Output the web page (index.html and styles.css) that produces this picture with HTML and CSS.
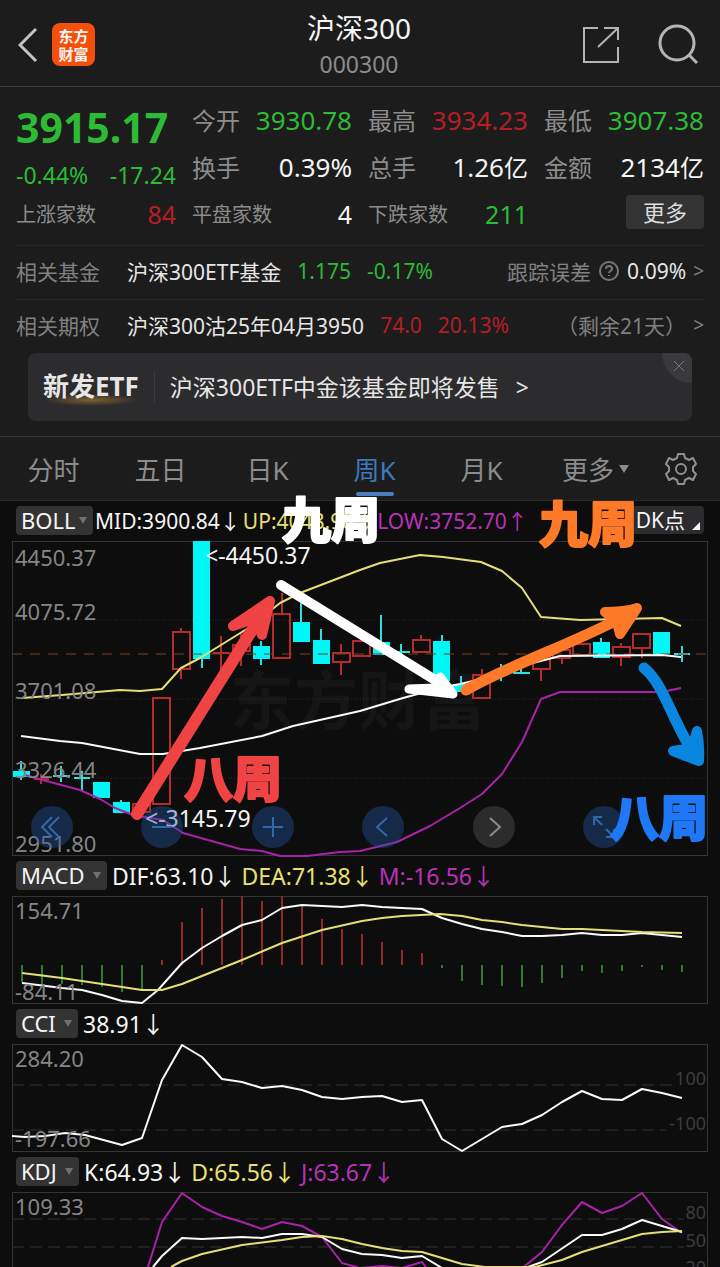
FILE: index.html
```
<!DOCTYPE html>
<html lang="zh-CN">
<head>
    <meta charset="UTF-8">
    <meta name="viewport" content="width=device-width, initial-scale=1.0">
    <title>沪深300</title>
    <link rel="stylesheet" href="styles.css">
</head>
<body>
    <header class="topbar">
        <div class="topbar-side">
            <button class="icon-btn" aria-label="返回">
                <svg width="20" height="36" viewBox="0 0 20 36"><path d="M18 2L2 18L18 34" fill="none" stroke="#c4c4c4" stroke-width="3"/></svg>
            </button>
            <a class="logo" href="#"><span>东方</span><span>财富</span></a>
        </div>
        <div class="topbar-title">
            <h1>沪深300</h1>
            <p>000300</p>
        </div>
        <div class="topbar-side topbar-right">
            <button class="icon-btn" aria-label="分享">
                <svg width="38" height="38" viewBox="0 0 38 38" fill="none" stroke="#b4b4b4" stroke-width="2"><path d="M16 2H2V36H36V21M22 2H36V14M36 2L16 21"/></svg>
            </button>
            <button class="icon-btn" aria-label="搜索">
                <svg width="42" height="42" viewBox="0 0 42 42" fill="none" stroke="#b4b4b4" stroke-width="3"><circle cx="19" cy="19" r="17"/><path d="M31 31L39 39"/></svg>
            </button>
        </div>
    </header>

    <section class="quote">
        <div class="price-box">
            <div class="price green">3915.17</div>
            <div class="change green"><span>-0.44%</span><span>-17.24</span></div>
        </div>
        <div class="cell"><span>今开</span><b class="green">3930.78</b></div>
        <div class="cell"><span>最高</span><b class="red">3934.23</b></div>
        <div class="cell"><span>最低</span><b class="green">3907.38</b></div>
        <div class="cell"><span>换手</span><b>0.39%</b></div>
        <div class="cell"><span>总手</span><b>1.26<i>亿</i></b></div>
        <div class="cell"><span>金额</span><b>2134<i>亿</i></b></div>
        <div class="cell small"><span>上涨家数</span><b class="red">84</b></div>
        <div class="cell small"><span>平盘家数</span><b>4</b></div>
        <div class="cell small"><span>下跌家数</span><b class="green">211</b></div>
        <div class="cell cell-more"><button class="more-btn">更多</button></div>
    </section>

    <section class="related">
        <a class="related-row" href="#">
            <span class="related-label">相关基金</span>
            <span class="related-name">沪深300ETF基金</span>
            <span class="green">1.175</span>
            <span class="green">-0.17%</span>
            <span class="related-right">
                <span>跟踪误差</span>
                <svg width="22" height="22" viewBox="0 0 22 22" fill="none" stroke="#777" stroke-width="2"><circle cx="11" cy="11" r="9"/><path d="M8 9C8 5 14 5 14 9C14 11 11 11 11 13M11 15V16"/></svg>
                <span class="related-white">0.09%</span>
                <span class="more-sign">&gt;</span>
            </span>
        </a>
        <a class="related-row" href="#">
            <span class="related-label">相关期权</span>
            <span class="related-name">沪深300沽25年04月3950</span>
            <span class="red">74.0</span>
            <span class="red">20.13%</span>
            <span class="related-right">
                <span>（剩余21天）</span>
                <span class="more-sign">&gt;</span>
            </span>
        </a>
    </section>

    <section class="banner">
        <strong class="banner-tag">新发ETF</strong>
        <a class="banner-link" href="#">沪深300ETF中金该基金即将发售<span>&gt;</span></a>
        <button class="banner-close" aria-label="关闭">
            <svg width="12" height="12" viewBox="0 0 12 12"><path d="M1 1L11 11M11 1L1 11" stroke="#777" stroke-width="1"/></svg>
        </button>
    </section>

    <nav class="tabs">
        <a href="#">分时</a>
        <a href="#">五日</a>
        <a href="#">日K</a>
        <a href="#" class="active">周K</a>
        <a href="#">月K</a>
        <a href="#" class="tab-more">更多<span class="caret"></span></a>
        <button class="icon-btn" aria-label="设置">
            <svg width="34" height="34" viewBox="0 0 34 34" fill="none" stroke="#909090" stroke-width="2" stroke-linejoin="round"><path d="M14 2H20L21 6L25 8L29 6L32 12L29 15V19L32 22L29 28L25 26L21 28L20 32H14L13 28L9 26L5 28L2 22L5 19V15L2 12L5 6L9 8L13 6Z"/><circle cx="17" cy="17" r="5"/></svg>
        </button>
    </nav>

    <main class="charts">
        <section class="panel">
            <div class="indicator indicator-boll">
                <span class="picker"><select aria-label="主图指标"><option>BOLL</option></select></span>
                <span>MID:3900.84<em>↓</em></span>
                <span class="yellow">UP:4048.98<em>↓</em></span>
                <span class="purple">LOW:3752.70<em>↑</em></span>
                <button class="dk-btn">DK点</button>
            </div>
            <div class="chart">
                <svg class="plot" viewBox="12 541 696 315">
                    <text class="watermark" x="230" y="724">东方财富</text>
                    <rect class="frame" x="12.5" y="541.5" width="695" height="314"/>
                    <path class="dots" d="M12 620H708M12 699H708M12 778H708"/>
                    <!-- rising candles -->
                    <g class="up">
                        <path d="M41 774V784M34 779H49M141 801V804M181 628V632M181 669V679M221 636V670M213 653H230M241 632V666M282 593V613M341 644V653M341 662V675M421 635V639M482 669V675M541 669V681M562 658V664M621 643V647M621 657V666M642 648V658"/>
                        <rect x="133" y="804" width="17" height="8"/>
                        <rect x="153" y="698" width="17" height="106"/>
                        <rect x="173" y="632" width="17" height="37"/>
                        <rect x="233" y="645" width="17" height="6"/>
                        <rect x="273" y="614" width="17" height="44"/>
                        <rect x="333" y="653" width="17" height="9"/>
                        <rect x="353" y="641" width="17" height="15"/>
                        <rect x="413" y="640" width="17" height="12"/>
                        <rect x="473" y="675" width="17" height="23"/>
                        <rect x="533" y="656" width="17" height="13"/>
                        <rect x="553" y="650" width="17" height="8"/>
                        <rect x="573" y="644" width="17" height="11"/>
                        <rect x="613" y="647" width="17" height="10"/>
                        <rect x="633" y="634" width="17" height="14"/>
                    </g>
                    <!-- falling candles -->
                    <g class="down">
                        <path d="M21 761V780M61 766V782M53 776H70M82 771V790M74 778H90M121 800V804M202 650V668M261 641V665M301 603V625M321 629V645M381 615V645M401 644V657M393 652H410M442 635V645M461 676V692M501 664V681M493 673H510M521 667V672M513 673H530M601 638V645M682 646V662M674 654H690"/>
                        <rect x="13" y="771" width="17" height="6"/>
                        <rect x="93" y="782" width="17" height="16"/>
                        <rect x="113" y="802" width="17" height="11"/>
                        <rect x="193" y="541" width="17" height="118"/>
                        <rect x="253" y="646" width="17" height="13"/>
                        <rect x="293" y="622" width="17" height="20"/>
                        <rect x="313" y="640" width="17" height="24"/>
                        <rect x="373" y="642" width="17" height="13"/>
                        <rect x="433" y="641" width="17" height="40"/>
                        <rect x="453" y="684" width="17" height="8"/>
                        <rect x="593" y="642" width="17" height="16"/>
                        <rect x="653" y="632" width="17" height="22"/>
                    </g>
                    <path class="now" d="M12 654H708"/>
                    <polyline class="line line-yellow" points="22,698 62,695 120,690 140,691 162,689 181,668 200,658 250,627 280,603 300,593 360,570 380,563 420,555 443,557 481,562 502,571 522,588 541,617 580,620 662,618 681,626"/>
                    <polyline class="line line-white" points="21,736 60,741 82,743 140,754 163,754 200,748 262,736 293,726 360,711 403,698 440,688 460,684 490,677 525,665 560,656 662,655 681,657"/>
                    <polyline class="line line-purple" points="25,775 50,782 80,790 100,799 115,808 133,815 163,820 183,833 240,849 262,851 280,856 307,856 340,852 360,851 397,842 430,826 460,808 482,794 502,774 522,742 541,699 560,692 662,692 681,688"/>
                    <g class="axis">
                        <text x="15" y="566">4450.37</text>
                        <text x="15" y="620">4075.72</text>
                        <text x="15" y="699">3701.08</text>
                        <text x="15" y="778">3326.44</text>
                        <text x="15" y="852">2951.80</text>
                    </g>
                    <text class="mark" x="205" y="564">&lt;-4450.37</text>
                    <text class="mark" x="145" y="827">&lt;-3145.79</text>
                </svg>
                <div class="controls">
                    <button aria-label="最左"><svg viewBox="0 0 42 42"><path d="M21 11L11 21L21 31M28 11L18 21L28 31"/></svg></button>
                    <button aria-label="缩小"><svg viewBox="0 0 42 42"><path d="M11 21H31"/></svg></button>
                    <button aria-label="放大"><svg viewBox="0 0 42 42"><path d="M11 21H31M21 11V31"/></svg></button>
                    <button aria-label="左移"><svg viewBox="0 0 42 42"><path d="M25 12L15 21L25 30"/></svg></button>
                    <button class="off" aria-label="右移"><svg viewBox="0 0 42 42"><path d="M17 12L27 21L17 30"/></svg></button>
                    <button aria-label="全屏"><svg viewBox="0 0 42 42"><path d="M11 19V11H19M11 11L19 19M23 23L31 31M31 23V31H23"/></svg></button>
                </div>
                <!-- hand drawn notes -->
                <svg class="notes" viewBox="12 541 696 315">
                    <g stroke="#f04444" fill="#f04444">
                        <path d="M137 814L264 611" stroke-width="12"/>
                        <path d="M233 626L270 601L262 635L256 618Z" stroke-width="10"/>
                    </g>
                    <g stroke="#fff" fill="#fff">
                        <path d="M281 585L440 683" stroke-width="10"/>
                        <path d="M409 689L453 694L440 677L436 688Z" stroke-width="9"/>
                    </g>
                    <g stroke="#ff7a28" fill="#ff7a28">
                        <path d="M466 690C510 665 570 645 625 616" stroke-width="11" fill="none"/>
                        <path d="M605 612Q625 612 637 608Q628 622 620 634L617 622Z" stroke-width="10"/>
                    </g>
                    <g stroke="#0a86e0" fill="#0a86e0">
                        <path d="M644 668C665 685 672 722 695 755" stroke-width="11" fill="none"/>
                        <path d="M673 751Q688 757 699 761Q700 745 697 731L692 748Z" stroke-width="10"/>
                    </g>
                    <g class="note-text">
                        <text x="282" y="538" fill="#fff" stroke="#fff">九周</text>
                        <text x="539" y="542" fill="#ff7a28" stroke="#ff7a28">九周</text>
                        <text x="184" y="797" fill="#f04444" stroke="#f04444">八周</text>
                        <text x="610" y="836" fill="#1f78f5" stroke="#1f78f5">八周</text>
                    </g>
                </svg>
            </div>
        </section>

        <section class="panel">
            <div class="indicator">
                <span class="picker"><select aria-label="副图指标一"><option>MACD</option></select></span>
                <span>DIF:63.10<em>↓</em></span>
                <span class="yellow">DEA:71.38<em>↓</em></span>
                <span class="purple">M:-16.56<em>↓</em></span>
            </div>
            <svg class="plot" viewBox="12 896 696 108">
                <rect class="frame" x="12.5" y="896.5" width="695" height="107"/>
                <path class="bar-down" d="M22 965V982M42 965V985M62 965V984M82 965V985M102 965V987M122 965V992M142 965V990M442 965V968M462 965V981M482 965V985M502 965V986M522 965V987M542 965V983M562 965V978M582 965V971M602 965V973M622 965V971M642 965V967M662 965V970M682 965V972"/>
                <path class="bar-up" d="M162 965V960M182 965V922M202 965V908M222 965V899M242 965V896M262 965V901M282 965V896M302 965V905M322 965V919M342 965V929M362 965V934M382 965V942M402 965V950M422 965V953"/>
                <polyline class="line line-white" points="22,983 62,988 82,990 102,995 122,1001 142,1003 158,990 182,963 202,948 222,936 242,925 262,920 282,908 302,905 342,907 362,905 382,907 422,909 442,918 462,924 482,929 502,932 522,936 542,936 562,935 582,933 602,935 622,935 642,933 682,937"/>
                <polyline class="line line-yellow" points="22,973 62,978 102,984 142,990 162,990 182,984 202,976 242,960 282,943 322,930 362,921 382,918 402,916 440,914 462,916 482,920 502,922 522,925 562,929 582,929 642,932 682,933"/>
                <g class="axis">
                    <text x="15" y="919">154.71</text>
                    <text x="15" y="1000">-84.11</text>
                </g>
            </svg>
        </section>

        <section class="panel">
            <div class="indicator">
                <span class="picker"><select aria-label="副图指标二"><option>CCI</option></select></span>
                <span>38.91<em>↓</em></span>
            </div>
            <svg class="plot" viewBox="12 1044 696 108">
                <rect class="frame" x="12.5" y="1044.5" width="695" height="107"/>
                <path class="dash" d="M12 1085H674M12 1130H666"/>
                <polyline class="line line-white" points="12,1136 25,1137 45,1136 65,1133 85,1135 122,1145 142,1138 162,1080 182,1045 202,1057 222,1079 242,1082 262,1088 282,1086 302,1090 322,1097 342,1099 362,1097 382,1096 402,1102 422,1100 442,1139 462,1151 482,1139 502,1127 522,1124 542,1115 562,1102 582,1091 602,1099 622,1100 642,1089 662,1093 682,1098"/>
                <g class="axis">
                    <text x="15" y="1067">284.20</text>
                    <text x="15" y="1147">-197.66</text>
                </g>
                <g class="level">
                    <text x="706" y="1085">100</text>
                    <text x="706" y="1130">-100</text>
                </g>
            </svg>
        </section>

        <section class="panel">
            <div class="indicator">
                <span class="picker"><select aria-label="副图指标三"><option>KDJ</option></select></span>
                <span>K:64.93<em>↓</em></span>
                <span class="yellow">D:65.56<em>↓</em></span>
                <span class="purple">J:63.67<em>↓</em></span>
            </div>
            <svg class="plot plot-last" viewBox="12 1192 696 75">
                <path class="frame" d="M12.5 1267V1192.5H707.5V1267"/>
                <path class="dash" d="M12 1219H684M12 1247H684"/>
                <polyline class="line line-purple" points="148,1267 162,1222 182,1193 202,1207 222,1216 242,1222 262,1229 282,1222 302,1226 322,1237 342,1263 360,1268 382,1266 402,1268 422,1262 428,1270 520,1270 542,1252 562,1225 582,1202 602,1213 622,1206 642,1193 662,1219 682,1233"/>
                <polyline class="line line-white" points="153,1267 162,1256 182,1238 202,1239 242,1237 262,1238 282,1234 302,1234 322,1237 342,1249 362,1254 382,1255 402,1258 422,1256 442,1268 525,1268 542,1262 582,1235 602,1235 622,1229 642,1220 682,1232"/>
                <polyline class="line line-yellow" points="171,1267 182,1261 202,1254 242,1245 282,1240 302,1237 322,1236 342,1239 362,1244 382,1248 402,1251 422,1252 442,1258 462,1264 485,1267 535,1267 562,1260 582,1252 642,1234 662,1232 682,1231"/>
                <g class="axis">
                    <text x="15" y="1215">109.33</text>
                </g>
                <g class="level">
                    <text x="706" y="1219">80</text>
                    <text x="706" y="1247">50</text>
                    <text x="706" y="1274">20</text>
                </g>
            </svg>
        </section>
    </main>
</body>
</html>
```
FILE: styles.css
```
* {
    box-sizing: border-box;
}
body {
    margin: 0;
    background-color: #1c1c1d;
    color: #f5f5f5;
    font-family: "Noto Sans", "Noto Sans CJK SC", sans-serif;
    overflow-x: hidden;
}
a {
    color: inherit;
    text-decoration: none;
}
button, select {
    font-family: inherit;
    border: 0;
    padding: 0;
    color: inherit;
    background: none;
    cursor: pointer;
}
svg {
    display: block;
}
.green {
    color: #2dbb35;
}
.red {
    color: #b51f24;
}
.yellow {
    color: #e8e070;
}
.purple {
    color: #b832b8;
}

/* top bar */
.topbar {
    display: flex;
    align-items: center;
    height: 87px;
    padding: 3px 20px 0 18px;
    border-bottom: 1px solid #3c3c3c;
}
.topbar-side {
    display: flex;
    align-items: center;
    gap: 14px;
    flex: 1;
}
.topbar-right {
    justify-content: flex-end;
    gap: 38px;
}
.logo {
    display: flex;
    flex-direction: column;
    align-items: center;
    justify-content: center;
    width: 43px;
    height: 43px;
    border-radius: 8px;
    background-color: #f4500c;
    font-family: "Noto Sans CJK SC", sans-serif;
    font-size: 15px;
    font-weight: bold;
    line-height: 18px;
}
.topbar-title {
    text-align: center;
}
.topbar-title h1 {
    margin: 0;
    font-size: 28px;
    font-weight: normal;
    line-height: 38px;
}
.topbar-title p {
    margin: 0;
    font-size: 23px;
    line-height: 34px;
    color: #8c8c8c;
}

/* quote numbers */
.quote {
    display: grid;
    grid-template-columns: repeat(4, 1fr);
    grid-auto-rows: 47px;
    column-gap: 16px;
    padding: 9px 16px 8px;
}
.price-box {
    grid-row: 1 / 3;
    white-space: nowrap;
}
.price {
    font-size: 41px;
    font-weight: bold;
    line-height: 62px;
}
.change {
    display: flex;
    justify-content: space-between;
    font-size: 23px;
    line-height: 34px;
}
.cell {
    display: flex;
    align-items: center;
    justify-content: space-between;
    color: #8c8c8c;
    font-size: 24px;
    white-space: nowrap;
}
.cell b {
    font-size: 26px;
    font-weight: normal;
    color: #f5f5f5;
}
.cell b i {
    font-size: 24px;
    font-style: normal;
}
.cell b.green {
    color: #2dbb35;
}
.cell b.red {
    color: #b51f24;
}
.small {
    font-size: 20px;
}
.small b {
    font-size: 25px;
}
.cell-more {
    justify-content: flex-end;
}
.more-btn {
    width: 78px;
    height: 34px;
    margin-bottom: 4px;
    border-radius: 4px;
    background-color: #333334;
    color: #dcdcdc;
    font-size: 22px;
    line-height: 34px;
}

/* related fund and option */
.related {
    margin: 0 16px;
}
.related-row {
    display: flex;
    align-items: center;
    gap: 16px;
    height: 54px;
    padding-bottom: 4px;
    border-top: 1px solid #282829;
    font-size: 21px;
    white-space: nowrap;
}
.related-label {
    margin-right: 11px;
    color: #808080;
}
.related-name, .related-white {
    color: #e6e6e6;
}
.related-right {
    display: flex;
    align-items: center;
    gap: 7px;
    margin-left: auto;
    color: #808080;
}
.more-sign {
    font-size: 19px;
}

/* new fund banner */
.banner {
    position: relative;
    display: flex;
    align-items: center;
    height: 68px;
    margin: 0 28px 15px;
    padding: 0 15px;
    border-radius: 8px;
    background-color: #2c2c2e;
    color: #e6e6e6;
    overflow: hidden;
    white-space: nowrap;
}
.banner-tag {
    padding-bottom: 2px;
    font-size: 26px;
    line-height: 36px;
    background: radial-gradient(ellipse at 50% 50%, #80602c 0, transparent 70%) bottom / 100% 12px no-repeat;
}
.banner-link {
    margin-left: 15px;
    padding-left: 15px;
    border-left: 1px solid #3a3a3c;
    font-size: 23px;
    line-height: 32px;
}
.banner-link span {
    margin-left: 16px;
}
.banner-close {
    position: absolute;
    top: 0;
    right: 0;
    display: flex;
    align-items: center;
    justify-content: center;
    width: 30px;
    height: 30px;
    padding: 0 0 4px 4px;
    border-bottom-left-radius: 30px;
    background-color: #3a3a3c;
}

/* period tabs */
.tabs {
    display: grid;
    grid-template-columns: repeat(6, 1fr) 78px;
    height: 65px;
    border-top: 1px solid #363636;
    border-bottom: 1px solid #2a2a2a;
    color: #8c8c8c;
    font-size: 26px;
}
.tabs a {
    position: relative;
    display: flex;
    align-items: center;
    justify-content: center;
}
.tabs .tab-more {
    padding-left: 14px;
}
.tabs .icon-btn {
    display: flex;
    align-items: center;
    justify-content: center;
}
.tabs .active {
    color: #3d78bd;
}
.tabs .active::after {
    content: "";
    position: absolute;
    bottom: 4px;
    width: 38px;
    height: 4px;
    border-radius: 2px;
    background-color: #4a7fc0;
}
.caret {
    margin-left: 5px;
    border: 5px solid transparent;
    border-top: 8px solid #8c8c8c;
    border-bottom: 0;
}

/* charts */
.charts {
    padding: 0 12px;
    background-color: #0d0d0e;
}
.indicator {
    display: flex;
    align-items: center;
    height: 40px;
    padding: 0 4px 2px;
    gap: 5px;
    font-size: 23px;
    white-space: nowrap;
}
.indicator-boll {
    font-size: 21px;
    gap: 2px;
}
.indicator em {
    font-family: "Noto Sans CJK SC", sans-serif;
    font-style: normal;
}
.picker {
    position: relative;
}
.picker select {
    display: block;
    height: 29px;
    padding: 0 22px 0 5px;
    border-radius: 4px;
    background-color: #333334;
    appearance: none;
    font-size: 22px;
    line-height: 29px;
}
.picker::after {
    content: "";
    position: absolute;
    right: 6px;
    top: 11px;
    border: 4px solid transparent;
    border-top: 7px solid #707070;
    border-bottom: 0;
    pointer-events: none;
}
.indicator-boll .picker select {
    padding-right: 17px;
}
.dk-btn {
    position: relative;
    height: 28px;
    margin-left: auto;
    padding: 0 19px 0 8px;
    border-radius: 4px;
    background-color: #2c2c2e;
    font-size: 21px;
    line-height: 28px;
}
.dk-btn::after {
    content: "";
    position: absolute;
    right: 4px;
    bottom: 4px;
    border-left: 8px solid transparent;
    border-bottom: 8px solid #f5f5f5;
}
.chart {
    position: relative;
}
.plot {
    width: 100%;
    height: auto;
    overflow: visible;
}
.plot-last {
    overflow: hidden;
}
.frame {
    fill: none;
    stroke: #343434;
    stroke-width: 1;
}
.dots {
    stroke: #2c2c2c;
    stroke-dasharray: 1 2;
}
.dash {
    stroke: #333;
    stroke-width: 1;
    stroke-dasharray: 12 6;
}
.now {
    stroke: #7a4020;
    stroke-width: 1;
    stroke-dasharray: 10 8;
}
.up {
    fill: none;
    stroke: #b42c2c;
    stroke-width: 2;
}
.down {
    fill: #00f7f7;
}
.down path {
    stroke: #2ee0e0;
    stroke-width: 2;
}
.bar-up {
    stroke: #8e2c2c;
    stroke-width: 2;
}
.bar-down {
    stroke: #2c7a2c;
    stroke-width: 2;
}
.line {
    fill: none;
    stroke-width: 2;
    stroke-linejoin: round;
}
.line-white {
    stroke: #fafafa;
}
.line-yellow {
    stroke: #e6df78;
}
.line-purple {
    stroke: #a823a8;
}
.axis {
    fill: #858585;
    font-size: 22px;
}
.level {
    fill: #3c3c3c;
    font-size: 18px;
    text-anchor: end;
}
.mark {
    fill: #f5f5f5;
    font-size: 23px;
}
.watermark {
    fill: #151516;
    font-size: 64px;
    font-weight: bold;
}

/* round buttons over the chart */
.controls {
    position: absolute;
    left: 19px;
    right: 83px;
    bottom: 8px;
    display: flex;
    justify-content: space-between;
}
.controls button {
    width: 42px;
    height: 42px;
    border-radius: 50%;
    background-color: rgba(36, 88, 160, 0.4);
}
.controls path {
    fill: none;
    stroke: #3268a8;
    stroke-width: 2;
}
.controls .off {
    background-color: #2c2c2d;
}
.controls .off path {
    stroke: #8c8c8c;
}
.notes {
    position: absolute;
    left: 0;
    top: 0;
    width: 100%;
    height: 100%;
    overflow: visible;
    stroke-linecap: round;
    stroke-linejoin: round;
    pointer-events: none;
}
.note-text {
    font-family: "Noto Sans CJK SC", sans-serif;
    font-size: 49px;
    font-weight: 900;
    stroke-width: 2;
}
```
